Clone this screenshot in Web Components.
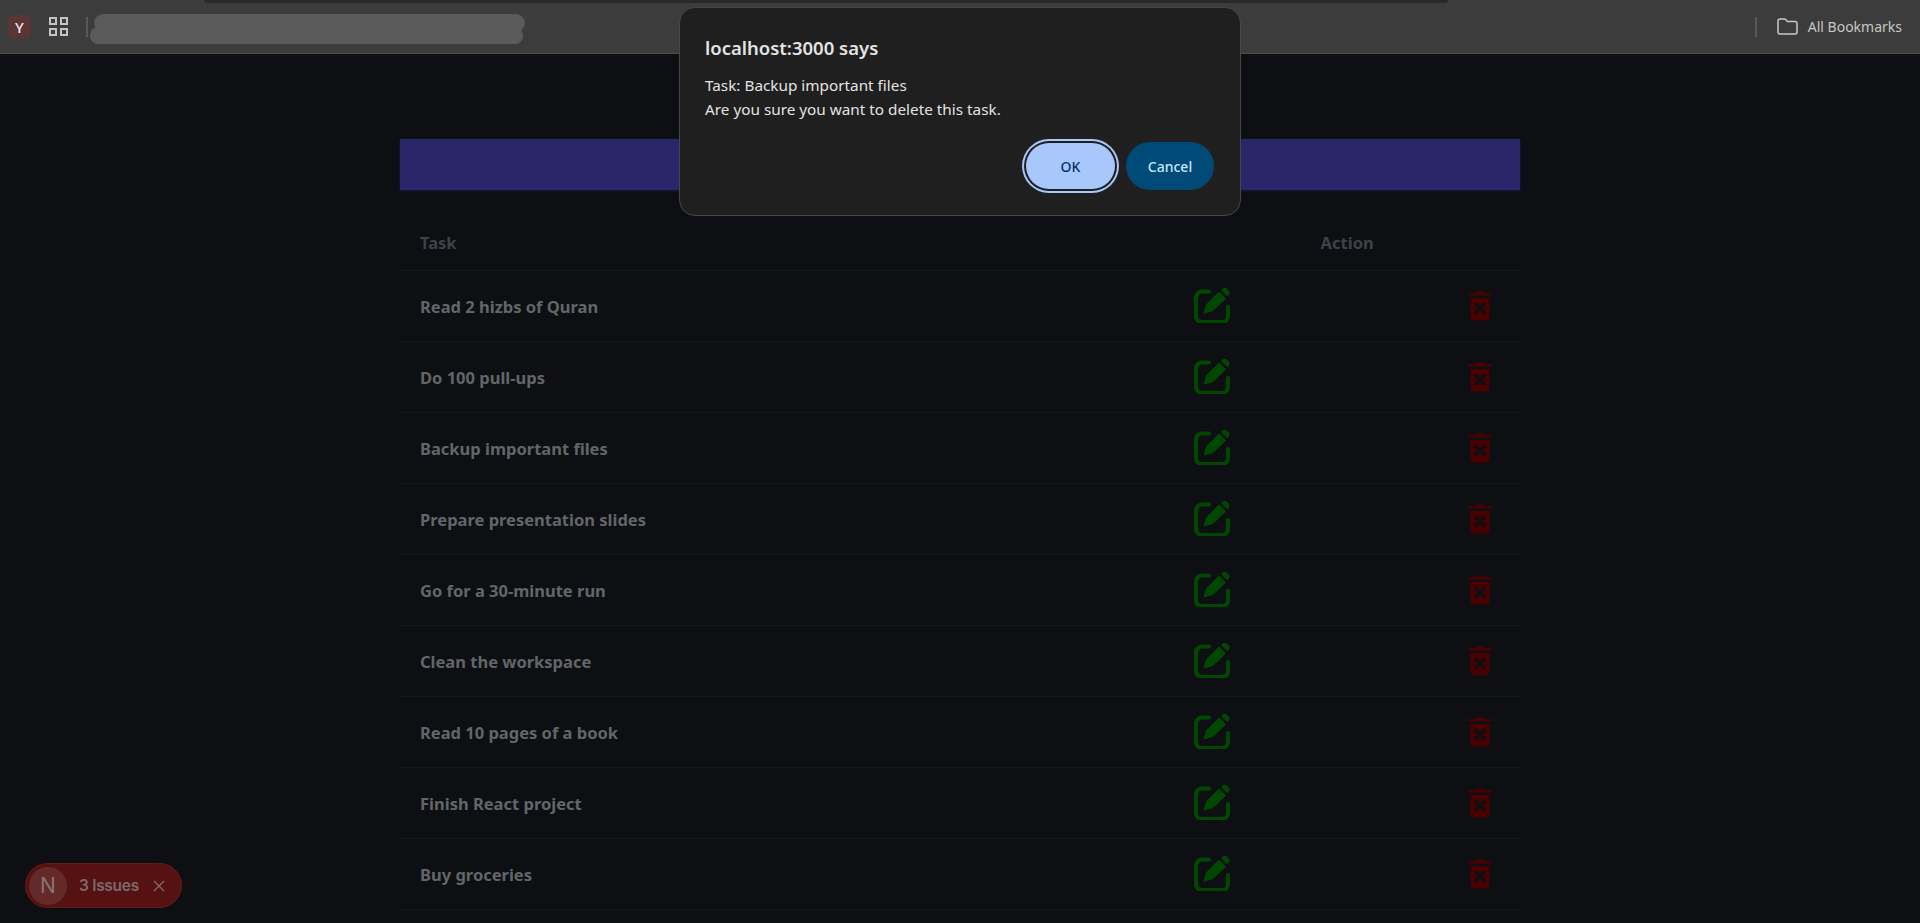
<!DOCTYPE html>
<html>
<head>
<meta charset="utf-8">
<title>Tasks</title>
<style>
  html, body { margin: 0; height: 923px; overflow: hidden; background: #0d0f13; }
  body { font-family: "Noto Sans", "Open Sans", sans-serif; }
</style>
</head>
<body>
<browser-bar></browser-bar>
<task-table>
  <task-row>Read 2 hizbs of Quran</task-row>
  <task-row>Do 100 pull-ups</task-row>
  <task-row>Backup important files</task-row>
  <task-row>Prepare presentation slides</task-row>
  <task-row>Go for a 30-minute run</task-row>
  <task-row>Clean the workspace</task-row>
  <task-row>Read 10 pages of a book</task-row>
  <task-row>Finish React project</task-row>
  <task-row>Buy groceries</task-row>
</task-table>
<confirm-dialog title-text="localhost:3000 says">
  <div>Task: Backup important files</div>
  <div>Are you sure you want to delete this task.</div>
</confirm-dialog>
<issues-badge count="3 Issues"></issues-badge>

<script>
// top chrome toolbar
class BrowserBar extends HTMLElement {
  constructor() {
    super();
    this.attachShadow({ mode: 'open' });
    this.shadowRoot.innerHTML = `
      <style>
        :host { display: flex; align-items: center; position: relative; height: 53px; box-sizing: content-box;
                background: #3c3c3c; border-bottom: 1px solid #4d4d4d; padding: 0 18px 0 8px; color: #c8c8c8; }
        .tabstrip { position: absolute; left: 204px; top: 0; width: 1244px; height: 3px; background: #292929;
                    border-radius: 0 0 8px 8px; }
        .profile { width: 23px; height: 24px; border-radius: 6px; background: #5a3535; color: #efe6ea;
                   font-size: 15px; font-weight: 500; display: flex; align-items: center; justify-content: center; }
        .apps { margin-left: 18px; width: 19px; height: 19px; display: block; }
        .sep { width: 2px; height: 20px; background: #585858; }
        .sep.first { margin-left: 18px; }
        .blob { position: absolute; background: #5a5a5a; }
        .blob.a { left: 94px; top: 14px; width: 431px; height: 18px; border-radius: 9px; }
        .blob.b { left: 90px; top: 27px; width: 433px; height: 17px; border-radius: 8px; }
        .right { margin-left: auto; display: flex; align-items: center; }
        .folder { margin-left: 20px; width: 21px; height: 17px; display: block; }
        .label { margin-left: 10px; font-size: 14px; color: #c7c7c7; }
      </style>
      <div class="tabstrip"></div>
      <div class="profile">Y</div>
      <svg class="apps" viewBox="0 0 19 19" fill="none" stroke="#c4c4c4" stroke-width="2">
        <rect x="1" y="1" width="6" height="6"/><rect x="12" y="1" width="6" height="6"/>
        <rect x="1" y="12" width="6" height="6"/><rect x="12" y="12" width="6" height="6"/>
      </svg>
      <div class="sep first"></div>
      <div class="blob a"></div>
      <div class="blob b"></div>
      <div class="right">
        <div class="sep"></div>
        <svg class="folder" viewBox="0 0 21 17" fill="none" stroke="#c8c8c8" stroke-width="1.5" stroke-linejoin="round">
          <path d="M1 3a2 2 0 0 1 2-2h5l2.5 2.5H18a2 2 0 0 1 2 2V14a2 2 0 0 1-2 2H3a2 2 0 0 1-2-2z"/>
        </svg>
        <span class="label">All Bookmarks</span>
      </div>`;
  }
}
customElements.define('browser-bar', BrowserBar);

class TaskTable extends HTMLElement {
  constructor() {
    super();
    this.attachShadow({ mode: 'open' });
    this.shadowRoot.innerHTML = `
      <style>
        :host { display: block; width: 1120px; margin: 85px 0 0 400px; }
        .band { height: 51px; background: #29266a; box-shadow: 0 1px 3px #1b1a45; }
        .head { margin-top: 23px; height: 58px; box-sizing: border-box; padding: 1px 20px 0; display: flex; align-items: center;
                border-bottom: 1px solid #14161a; font-size: 16.5px; font-weight: 700; color: #3f4249; }
        .head span:last-child { margin-left: 864px; }
      </style>
      <div class="band"></div>
      <div class="head"><span>Task</span><span>Action</span></div>
      <slot></slot>`;
  }
}
customElements.define('task-table', TaskTable);

// one task: name, edit icon, delete icon
class TaskRow extends HTMLElement {
  constructor() {
    super();
    this.attachShadow({ mode: 'open' });
    this.shadowRoot.innerHTML = `
      <style>
        :host { display: grid; grid-template-columns: 774px 37px 237px 24px; align-items: center; height: 71px;
                box-sizing: border-box; padding: 0 28px 0 20px; border-bottom: 1px solid #14161a;
                font-size: 16.5px; font-weight: 700; color: #62666a; }
        svg { display: block; margin-top: -3px; }
      </style>
      <div><slot></slot></div>
      <svg width="37" height="37" viewBox="0 0 37 37">
        <path d="M15 5.500H8a6 6 0 0 0-6 6v18.500a6 6 0 0 0 6 6h20a6 6 0 0 0 6-6v-9" fill="none" stroke="#004800" stroke-width="4.2" stroke-linecap="round"/>
        <path d="M10 27l2.500-8.500L25 6l6.500 6.500L19 24.500z" fill="#004800" stroke="#004800" stroke-width="1" stroke-linejoin="round"/>
        <path d="M27 4l1-1a3.800 3.800 0 0 1 5.300 0l1 1a3.800 3.800 0 0 1 0 5.300l-1 1z" fill="#004800"/>
      </svg>
      <div></div>
      <svg width="24" height="32" viewBox="0 0 24 32">
        <path d="M0 6.500V4h7C8.500 2.700 10 2 12 2s3.500 .7 5 2h7v2.500z" fill="#480000"/>
        <path d="M2.500 9h19v19a3.500 3.500 0 0 1-3.500 3.500H6A3.500 3.500 0 0 1 2.500 28z" fill="#480000"/>
        <path d="M8 15.500l8 8M16 15.500l-8 8" stroke="#0d0f13" stroke-width="3.200" stroke-linecap="round"/>
      </svg>`;
  }
}
customElements.define('task-row', TaskRow);

// the alert that lies over the page
class ConfirmDialog extends HTMLElement {
  constructor() {
    super();
    this.attachShadow({ mode: 'open' });
    this.shadowRoot.innerHTML = `
      <style>
        :host { display: block; position: absolute; left: 679px; top: 7px; width: 562px; height: 209px; box-sizing: border-box;
                background: #1f1f1f; border: 1px solid #474747; border-radius: 16px; padding: 24px 26px 0 25px; color: #e3e3e3; }
        h2 { margin: 0; font-size: 18.5px; line-height: 32px; font-weight: 600; }
        .msg { margin-top: 9px; font-size: 15.3px; line-height: 24px; }
        .btns { display: flex; justify-content: flex-end; gap: 9px; margin-top: 21px; }
        button { font: inherit; font-size: 14px; font-weight: 500; height: 48px; border: 0; border-radius: 24px; padding: 0; }
        .ok { width: 89px; height: 46px; margin: 1px 0; background: #a8c7fa; color: #062e6f; box-shadow: 0 0 0 2px #1f1f1f, 0 0 0 4px #a8c7fa; }
        .cancel { width: 88px; background: #004a77; color: #c2e7ff; margin-left: 2px; }
      </style>
      <h2></h2>
      <div class="msg"><slot></slot></div>
      <div class="btns"><button class="ok">OK</button><button class="cancel">Cancel</button></div>`;
    this.shadowRoot.querySelector('h2').textContent = this.getAttribute('title-text');
  }
}
customElements.define('confirm-dialog', ConfirmDialog);

class IssuesBadge extends HTMLElement {
  constructor() {
    super();
    this.attachShadow({ mode: 'open' });
    this.shadowRoot.innerHTML = `
      <style>
        :host { display: flex; align-items: center; position: absolute; left: 25px; top: 863px; width: 157px; height: 45px;
                box-sizing: border-box; padding: 3px; background: #561212; border: 1px solid #681a1a; border-radius: 23px;
                font-family: Inter, sans-serif; color: #7a6a6a; }
        .n { width: 38px; height: 38px; border-radius: 50%; background: #642a2a; color: #8a7272; font-size: 21px;
             display: flex; align-items: center; justify-content: center; }
        .count { margin-left: 12px; font-size: 15.500px; font-weight: 600; letter-spacing: -0.3px; white-space: nowrap; }
        svg { margin-left: 14px; display: block; }
      </style>
      <div class="n">N</div>
      <span class="count"></span>
      <svg width="12" height="12" viewBox="0 0 12 12" stroke="#7f6a6a" stroke-width="1.400" fill="none"><path d="M1 1l10 10M11 1L1 11"/></svg>`;
    this.shadowRoot.querySelector('.count').textContent = this.getAttribute('count');
  }
}
customElements.define('issues-badge', IssuesBadge);
</script>
</body>
</html>
